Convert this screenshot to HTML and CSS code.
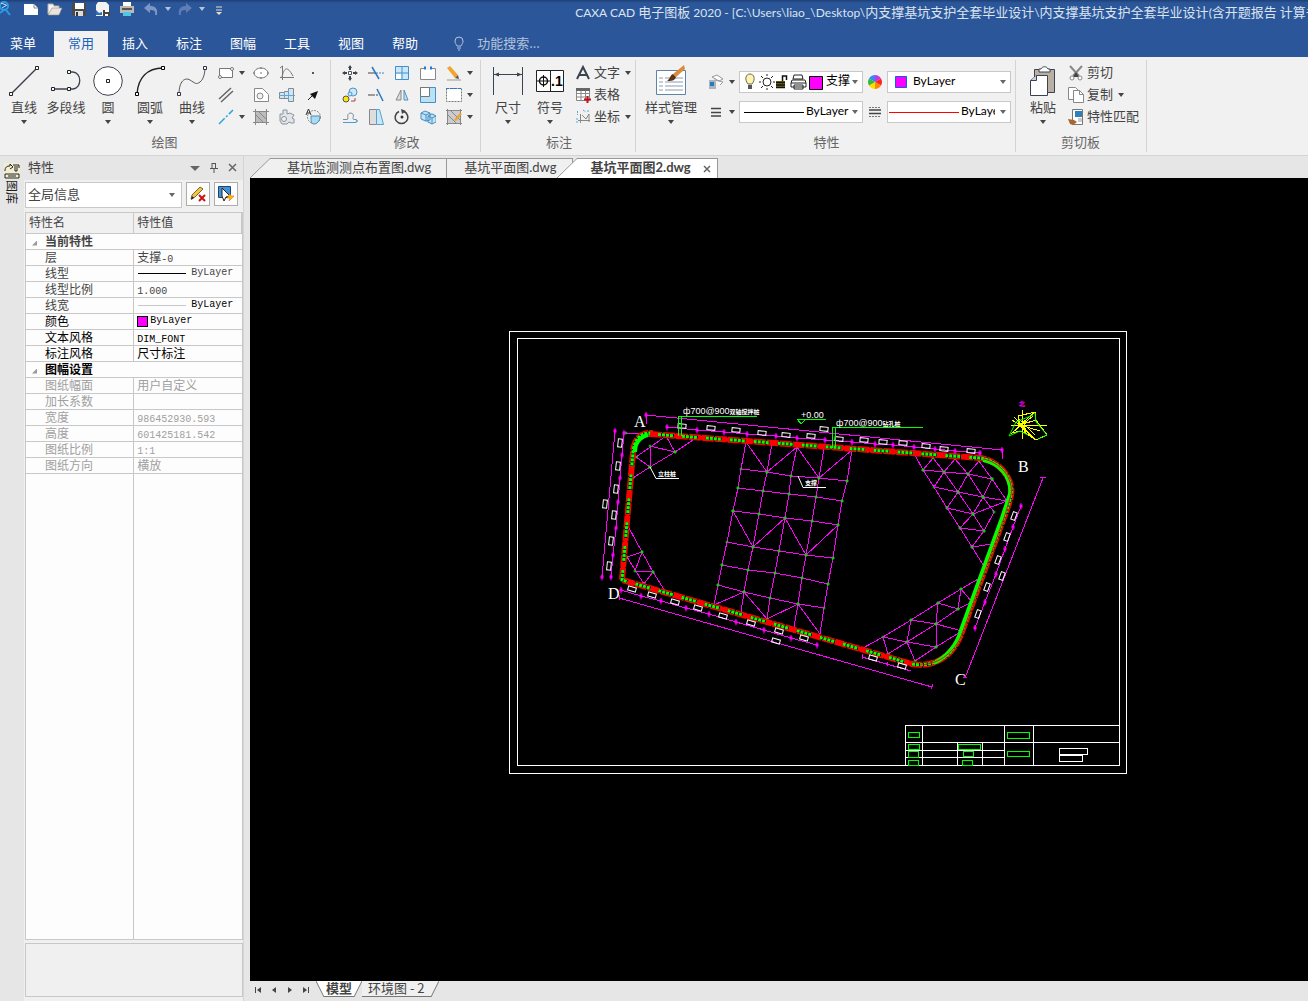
FILE: index.html
```html
<!DOCTYPE html>
<html lang="zh-CN">
<head>
    <meta charset="UTF-8">
    <meta name="viewport" content="width=device-width, initial-scale=1.0">
    <title>CAXA CAD 电子图板 2020</title>
    <link rel="stylesheet" href="styles.css">
</head>
<body>
    <header class="app-header">
        <div class="titlebar">
            <div class="quick-access">
                <svg class="logo" width="12" height="16" viewBox="0 0 12 16"><g fill="none" stroke="#2b9be8" stroke-width="2"><circle cx="4" cy="5" r="4"/><path d="M6 9l4 5M0 12l5-4"/></g><path d="M1 2l5 2M2 7l5-3" stroke="#bfe3ff"/></svg>
                <button aria-label="新建"><svg width="16" height="16"><path d="M1 3h10l4 4v7H1z" fill="#fff"/><path d="M11 3v4h4" fill="none" stroke="#8a8a8a"/></svg></button>
                <button aria-label="打开"><svg width="16" height="16"><path d="M1 13V3h5l1 2h5v2" fill="#f4f4f4" stroke="#b9b2a4"/><path d="M1 14l4-7h10l-3 7z" fill="#e8e5df" stroke="#8f8a80" stroke-width=".6"/></svg></button>
                <button aria-label="保存"><svg width="16" height="16"><path d="M1 2h14v13H3l-2-2z" fill="#4a4a4a"/><path d="M4 2h9v6H4z" fill="#fff"/><path d="M4 10h8v5H4z" fill="#ddd"/><path d="M5 11h2v4H5z" fill="#333"/></svg></button>
                <button aria-label="另存为"><svg width="16" height="16"><path d="M3 1h8l3 3v11H1V4z" fill="#f2f2f2"/><path d="M1 9l3 3 3-1v3H1z" fill="#2b6fb4"/><path d="M8 9h7v6H8z" fill="#444"/><path d="M10 9h4v2h-4zM10 13h3v2h-3z" fill="#fff"/></svg></button>
                <button aria-label="打印"><svg width="16" height="16"><path d="M4 1h8v5H4z" fill="#fff"/><path d="M1 5h14v7H1z" fill="#bdb9b2"/><path d="M3 7h10v2H3z" fill="#555"/><path d="M4 11h8v4H4z" fill="#4fc8e8"/></svg></button>
                <button aria-label="撤销"><svg width="16" height="16"><path d="M1 7l6-5v3c5 0 8 2 7 9h-2c1-4-1-5-5-5v3z" fill="#7d96c3"/></svg></button>
                <span class="caret light"></span>
                <button aria-label="重做"><svg width="16" height="16"><path d="M15 7L9 2v3C4 5 1 7 2 14h2c-1-4 1-5 5-5v3z" fill="#5f7db3"/></svg></button>
                <span class="caret light"></span>
                <button aria-label="自定义快速启动"><svg width="16" height="16"><path d="M5 6h6M5 9h6" stroke="#e6dcc8"/><path d="M5 11h6l-3 3z" fill="#e6dcc8"/></svg></button>
            </div>
            <h1 class="window-title"><span class="latin">CAXA CAD </span>电子图板<span class="latin"> 2020 - [C:\Users\liao_\Desktop\</span>内支撑基坑支护全套毕业设计<span class="latin">\</span>内支撑基坑支护全套毕业设计<span class="latin">(</span>含开题报告 计算书</h1>
        </div>
        <nav class="menu-tabs">
            <a href="#" class="menu-tab file-tab">菜单</a>
            <a href="#" class="menu-tab active">常用</a>
            <a href="#" class="menu-tab">插入</a>
            <a href="#" class="menu-tab">标注</a>
            <a href="#" class="menu-tab">图幅</a>
            <a href="#" class="menu-tab">工具</a>
            <a href="#" class="menu-tab">视图</a>
            <a href="#" class="menu-tab">帮助</a>
            <label class="search">
                <svg width="12" height="16" viewBox="0 0 12 16"><path d="M4 10C3 8 2 7 2 5a4 4 0 0 1 8 0c0 2-1 3-2 5zM4 12h4M5 14h2" fill="none" stroke="#b4c3dc"/></svg>
                <input type="text" placeholder="功能搜索..." aria-label="功能搜索">
            </label>
        </nav>
    </header>

    <section class="ribbon">
        <div class="group">
            <div class="group-body">
                <div class="big-row">
                    <button class="big-btn"><svg width="30" height="30"><path d="M2 28L28 2" stroke="#3c4350" stroke-width="1.500"/><g fill="#fff" stroke="#222"><path d="M.5 26.500h3v3h-3zM26.500.5h3v3h-3z"/></g></svg><span>直线</span><i class="caret"></i></button>
                    <button class="big-btn"><svg width="30" height="30"><path d="M2 23h16M18 6h4c9 1 9 16 0 17h-4" fill="none" stroke="#3c4350" stroke-width="1.300"/><g fill="#fff" stroke="#222"><path d="M.5 21.500h3v3h-3zM16.500 21.500h3v3h-3zM16.500 4.500h3v3h-3z"/></g></svg><span>多段线</span></button>
                    <button class="big-btn"><svg width="30" height="30"><circle cx="15" cy="15" r="14.300" fill="#fff" stroke="#3c4350"/><path d="M13.500 13.500h3v3h-3z" fill="#fff" stroke="#222"/></svg><span>圆</span><i class="caret"></i></button>
                    <button class="big-btn"><svg width="30" height="30"><path d="M2 28C3 12 12 2 28 2" fill="none" stroke="#222" stroke-width="1.300"/><g fill="#fff" stroke="#000"><path d="M.5 26.500h3v3h-3zM26.500.5h3v3h-3z"/></g></svg><span>圆弧</span><i class="caret"></i></button>
                    <button class="big-btn"><svg width="30" height="30"><path d="M2 28C2 15 8 11 13 14s6 5 10 2 5-10 5-15" fill="none" stroke="#555"/><g fill="#fff" stroke="#334"><path d="M.5 26.500h3v3h-3zM26.500.5h3v3h-3z"/></g></svg><span>曲线</span><i class="caret"></i></button>
                </div>
                <div class="icon-grid draw-grid">
                    <button aria-label="矩形"><svg width="16" height="16"><path d="M1.500 3.500h13v9h-13z" fill="#fff" stroke="#777"/><circle cx="14" cy="4" r="1.500" fill="#fff" stroke="#777"/><circle cx="2" cy="12" r="1.500" fill="#fff" stroke="#777"/></svg></button>
                    <i class="caret"></i>
                    <button aria-label="椭圆"><svg width="16" height="16"><ellipse cx="8" cy="8" rx="7" ry="5" fill="#fff" stroke="#777"/><path d="M8 7v2M0 8h2M14 8h2M8 2v2M8 12v2" stroke="#777"/></svg></button>
                    <button aria-label="公式曲线"><svg width="16" height="16"><path d="M3.500 1v14M1 12.500h14M1 3l2.500-2M3 12C5 3 8 0 14 11" fill="none" stroke="#777"/></svg></button>
                    <button aria-label="点"><svg width="16" height="16"><path d="M7 7h2v2H7z" fill="#555"/></svg></button>

                    <button aria-label="平行线"><svg width="16" height="16"><path d="M1 12L13 1M3 15L15 4" stroke="#666" stroke-width="1.500"/></svg></button>
                    <i></i>
                    <button aria-label="轮廓"><svg width="16" height="16"><path d="M1.500 1.500h8l6 6v7h-14z" fill="#fff" stroke="#888"/><circle cx="7" cy="9" r="3" fill="#f1f1f1" stroke="#888"/></svg></button>
                    <button aria-label="孔轴"><svg width="16" height="16"><path d="M.5 5.500h5v-1h4v-3h5v13h-5v-3h-9z" fill="#cfe6f7" stroke="#888"/><path d="M0 8.500h16M9.500 3v10M5.500 5v6" stroke="#6ba3d0"/></svg></button>
                    <button aria-label="箭头"><svg width="16" height="16"><path d="M3 13l6-6" stroke="#222"/><path d="M13 4l-3 8-5-5z" fill="#111"/></svg></button>

                    <button aria-label="中心线"><svg width="16" height="16"><path d="M1 15L15 1" stroke="#2aa5dd" stroke-width="1.500" stroke-dasharray="8 2 2 2"/></svg></button>
                    <i class="caret"></i>
                    <button aria-label="填充"><svg width="16" height="16"><path d="M3 3h10v10H3z" fill="#bbb"/><path d="M2.500 0v16M13.500 0v16M0 2.500h16M0 13.500h16M3 6l7 7M6 3l7 7" stroke="#888"/></svg></button>
                    <button aria-label="齿轮"><svg width="16" height="16"><path d="M1 5h3V1h4v4l3-1 4 2-2 3 2 1v4h-3l-2-1-2 2H3l-2-3z" fill="#dfe5ea" stroke="#8b949c"/><circle cx="5" cy="10" r="2.500" fill="#f1f1f1" stroke="#8b949c"/></svg></button>
                    <button aria-label="局部放大"><svg width="16" height="16"><circle cx="9" cy="8" r="6.500" fill="none" stroke="#888" stroke-dasharray="2 1"/><path d="M6 7h9c0 5-3 8-6 8s-3-3-3-8z" fill="#a8dcf5" stroke="#58a"/><path d="M1 6l2.500-6L6 6M2 4h3" fill="none" stroke="#333"/></svg></button>
                </div>
            </div>
            <h2>绘图</h2>
        </div>

        <div class="group">
            <div class="group-body">
                <div class="icon-grid modify-grid">
                    <button aria-label="平移"><svg width="16" height="16"><path d="M6.500 6.500h3v3h-3z" fill="#fff" stroke="#555"/><path d="M8 0l2 3H9v2H7V3H6zM8 16l2-3H9v-2H7v2H6zM0 8l3-2v1h2v2H3v1zM16 8l-3-2v1h-2v2h2v1z" fill="#3c4350"/></svg></button>
                    <button aria-label="裁剪"><svg width="16" height="16"><path d="M0 8h8" stroke="#444"/><path d="M8 8h8" stroke="#3b8ad0" stroke-dasharray="2 1"/><path d="M4 2l7 12" stroke="#2b78c5" stroke-width="1.500"/></svg></button>
                    <button aria-label="阵列"><svg width="16" height="16"><path d="M1.500 1.500h13v13h-13z" fill="#c9e9fa" stroke="#4590c8"/><path d="M8 1v14M1 8h14" stroke="#4590c8"/><path d="M2 9h5v5H2z" fill="#fff"/></svg></button>
                    <button aria-label="拉伸"><svg width="16" height="16"><path d="M.5 3.500h15v11H.5z" fill="#fff" stroke="#888"/><path d="M6 2h4v3H6z" fill="#f1f1f1"/><path d="M4 3h2M10 3h2" stroke="#2b78c5" stroke-width="3"/></svg></button>
                    <button aria-label="删除"><svg width="16" height="16"><path d="M1 3l3-2 8 9-3 3z" fill="#f3a52b"/><path d="M9 13l3-3 1 4z" fill="#555"/><path d="M1 15h14" stroke="#999"/></svg></button>
                    <i class="caret"></i>

                    <button aria-label="平移复制"><svg width="16" height="16"><circle cx="4" cy="12" r="3" fill="#ffe600" stroke="#555"/><circle cx="11" cy="5" r="4" fill="#cbe8fa" stroke="#4d94c6"/><circle cx="8" cy="7" r="2" fill="#cbe8fa" stroke="#4d94c6"/><path d="M9 14h4v-3" fill="none" stroke="#a44"/></svg></button>
                    <button aria-label="延伸"><svg width="16" height="16"><path d="M0 8h5" stroke="#444"/><path d="M5 8h6" stroke="#444" stroke-dasharray="2 1"/><path d="M9 2l6 12" stroke="#2b78c5" stroke-width="1.500"/></svg></button>
                    <button aria-label="镜像"><svg width="16" height="16"><path d="M7 3v10H2z" fill="#ddd" stroke="#888"/><path d="M10 3v10h4z" fill="#bfe2f6" stroke="#5a8fb4"/></svg></button>
                    <button aria-label="缩放"><svg width="16" height="16"><path d="M.5.5h15v15H.5z" fill="#b9e2f8" stroke="#4b8fc2"/><path d="M.5.5h9v9h-9z" fill="#fff" stroke="#777"/></svg></button>
                    <button aria-label="分解"><svg width="16" height="16"><path d="M.5 1.500h15v13H.5z" fill="#fff" stroke="#777" stroke-dasharray="2 1"/><path d="M0 1.500h16" stroke="#2b78c5" stroke-dasharray="3 1"/></svg></button>
                    <i class="caret"></i>

                    <button aria-label="偏移"><svg width="16" height="16"><path d="M1 10.500h4c2 0 0-3 1-5 2-3 7-1 5 3 0 2 0 2 2 2 3 0 2 3 0 3H1" fill="none" stroke="#7d8f9c"/><path d="M1 13.500h12c3 0 3-3 0-3" fill="none" stroke="#4b9ad0"/></svg></button>
                    <button aria-label="倒角"><svg width="16" height="16"><path d="M1.500.5h7v15h-7z" fill="#ddd" stroke="#888"/><path d="M8.500.5h3l4 15h-7z" fill="#c6e8f9" stroke="#5aa0cc"/></svg></button>
                    <button aria-label="旋转"><svg width="16" height="16"><path d="M5 2.500a6.300 6.300 0 1 0 5 0" fill="none" stroke="#444" stroke-width="1.500"/><path d="M7 0l5 2-4 3z" fill="#444"/><circle cx="8" cy="8" r="1.500" fill="#333"/></svg></button>
                    <button aria-label="块"><svg width="16" height="16"><path d="M1 4l4-2 10 3v8l-4 2-10-4z" fill="#bfe3f7"/><path d="M1 4l4-2 5 2v7l-4 1-5-2zM1 4l5 2v6M6 6l4-2M8 7l4-2 4 2v6l-4 2-4-2zM8 7l4 2v6M12 9l4-2" fill="none" stroke="#4d8fbe"/></svg></button>
                    <button aria-label="填充编辑"><svg width="16" height="16"><path d="M2 2h12v12H2z" fill="#ccc"/><path d="M1.500 0v16M14.500 0v16M0 1.500h16M0 14.500h16M2 6l8 8M5 2l9 9" stroke="#888"/><path d="M8 11l6-7 2 1-6 7z" fill="#f0a02b"/></svg></button>
                    <i class="caret"></i>
                </div>
            </div>
            <h2>修改</h2>
        </div>

        <div class="group">
            <div class="group-body">
                <div class="big-row">
                    <button class="big-btn"><svg width="30" height="30"><path d="M.5 1v28M29.500 1v28M1 8.500h28" stroke="#3c4350"/><path d="M1 8.500l5-2v4zM29 8.500l-5-2v4z" fill="#3c4350"/></svg><span>尺寸</span><i class="caret"></i></button>
                    <button class="big-btn"><svg width="30" height="30"><path d="M1.500 4.500h27v21h-27zM15.500 4v22" fill="#fff" stroke="#222"/><circle cx="8.500" cy="15" r="4" fill="none" stroke="#111" stroke-width="1.500"/><path d="M2 15h13M8.500 9v12" stroke="#111"/><text class="symbol-text" x="16" y="20">.1</text></svg><span>符号</span><i class="caret"></i></button>
                </div>
                <div class="list">
                    <button><svg width="16" height="16"><path d="M2 14L8 2l6 12M4 10h8" fill="none" stroke="#3c4350" stroke-width="2"/></svg>文字<i class="caret"></i></button>
                    <button><svg width="16" height="16"><path d="M1.500 1.500h13v12h-13zM1 6.500h14M1 10h14M6 4v10M10.500 4v10" fill="#fff" stroke="#888"/><path d="M1 1h14v3H1z" fill="#666"/><path d="M9 12.500h7M12.500 9v7" stroke="#c1121c" stroke-width="2"/></svg>表格</button>
                    <button><svg width="16" height="16"><path d="M5.500 5v9M3 11.500h12M7 6l4 4 3-5v8" fill="none" stroke="#888"/><path d="M2.500 2v4M8 1l3 2M13 1v3M2 9v5" stroke="#5aa4d8" stroke-dasharray="2 1"/></svg>坐标<i class="caret"></i></button>
                </div>
            </div>
            <h2>标注</h2>
        </div>

        <div class="group">
            <div class="group-body">
                <button class="big-btn wide"><svg width="30" height="30" overflow="visible"><path d="M.5 4.500h29v24H.5z" fill="#fff" stroke="#5d83a8"/><path d="M3 12h4M3 16h4M3 20h4M3 24h4M9 12h18M9 16h18M9 20h18M9 24h18" stroke="#8b9db0"/><path d="M28-1l1 4-9 8-3-3z" fill="#d98c3a"/><path d="M17 8l3 3c-1 4-5 4-9 4 3-2 3-6 6-7z" fill="#5c3518"/></svg><span>样式管理</span><i class="caret"></i></button>
                <div class="props">
                    <button aria-label="图层"><svg width="16" height="16"><path d="M4 3l5-2 6 4-4 2zM6 6l9 2-3 3" fill="#fff" stroke="#999"/><path d="M1 6h7v9H1z" fill="#a9b5c0"/><path d="M2 8h4v4H2z" fill="#2b78b5"/></svg></button>
                    <i class="caret"></i>
                    <div class="combo">
                        <svg width="80" height="18">
                            <path d="M4 11C0 6 2 1 6 1s6 5 2 10z" fill="#fff3b0" stroke="#665"/><path d="M4 12h4v4H4z" fill="#555"/>
                            <circle cx="23" cy="9" r="4" fill="#fff" stroke="#222"/><path d="M23 1v2M23 15v2M15 9h2M29 9h2M17 3l2 2M27 13l2 2M17 15l2-2M27 5l2-2" stroke="#222"/>
                            <path d="M32 8h9v7h-9z" fill="#776d10"/><path d="M32 9.500h9M32 12h9M32 14.500h9M38.500 8V3h4v4" fill="none" stroke="#111" stroke-width="1.500"/>
                            <path d="M50 2h8l1 4H49zM48 7h13l1 3v4H47v-4zM50 12h9v4h-9z" fill="#fff" stroke="#222"/><path d="M47 10h15" stroke="#222"/>
                            <path d="M65.500 3.500h13v13h-13z" fill="#f0f" stroke="#000"/>
                        </svg>
                        <select aria-label="当前图层"><option>支撑-0</option></select><i class="caret"></i>
                    </div>
                    <button aria-label="颜色"><svg width="16" height="16"><path d="M8 8V1a7 7 0 0 1 6 3.500z" fill="#c038e0"/><path d="M8 8l6-3.500a7 7 0 0 1 0 7z" fill="#f22"/><path d="M8 8l6 3.500A7 7 0 0 1 8 15z" fill="#f80"/><path d="M8 8v7a7 7 0 0 1-6-3.500z" fill="#fd0"/><path d="M8 8l-6 3.500a7 7 0 0 1 0-7z" fill="#3b3"/><path d="M8 8L2 4.500A7 7 0 0 1 8 1z" fill="#38f"/></svg></button>
                    <div class="combo color-combo">
                        <svg width="12" height="12"><path d="M.5.5h11v11H.5z" fill="#f0f" stroke="#0a64d8"/></svg>
                        <select aria-label="当前颜色"><option>ByLayer</option></select><i class="caret"></i>
                    </div>

                    <button aria-label="线型"><svg width="16" height="16"><path d="M3 4.500h10M3 8.500h10M3 12h10" stroke="#444" stroke-width="1.300"/></svg></button>
                    <i class="caret"></i>
                    <div class="combo">
                        <svg width="60" height="3"><path d="M0 1.500h60" stroke="#000"/></svg>
                        <select aria-label="当前线型"><option>ByLayer</option></select><i class="caret"></i>
                    </div>
                    <button aria-label="线宽"><svg width="16" height="16"><path d="M2 3.500h12M2 12.500h12" stroke="#777" stroke-dasharray="2 1"/><path d="M2 6h12M2 9.500h12" stroke="#444" stroke-width="1.500"/></svg></button>
                    <div class="combo width-combo">
                        <svg width="70" height="3"><path d="M0 1.500h70" stroke="#f00"/></svg>
                        <select aria-label="当前线宽"><option>ByLayer</option></select><i class="caret"></i>
                    </div>
                </div>
            </div>
            <h2>特性</h2>
        </div>

        <div class="group">
            <div class="group-body">
                <button class="big-btn"><svg width="30" height="30"><path d="M6.500 3.500h20v23h-20z" fill="#b9afa5" stroke="#3c4350"/><path d="M11 3h2c1-3 6-3 7 0h2v3H11z" fill="#fff" stroke="#3c4350"/><path d="M8.500 9.500h11v20h-17v-15z" fill="#fff" stroke="#3c4350"/><path d="M8.500 9.500v5h-6" fill="#c9d2da" stroke="#3c4350"/></svg><span>粘贴</span><i class="caret"></i></button>
                <div class="list">
                    <button><svg width="16" height="16"><path d="M2 1l9 10M14 1L5 11" stroke="#888" stroke-width="2"/><path d="M8 7l3 5H5z" fill="#444"/><circle cx="4" cy="13" r="2" fill="#fff" stroke="#888"/><circle cx="12" cy="13" r="2" fill="#fff" stroke="#888"/></svg>剪切</button>
                    <button><svg width="16" height="16"><path d="M.5.500h7l3 3v9H.5z" fill="#fff" stroke="#888"/><path d="M5.500 3.500h6l4 4v8h-10z" fill="#fff" stroke="#888"/><path d="M11.500 3.500v4h4" fill="none" stroke="#888"/></svg>复制<i class="caret"></i></button>
                    <button><svg width="16" height="16"><path d="M4.500.500h10v15h-10z" fill="#fff" stroke="#777"/><path d="M7 2h7v6H7z" fill="#2f7fb8"/><path d="M10 10h4M10 12h4" stroke="#999"/><path d="M0 10l6 1 3 2-4 3-3-1z" fill="#a8662c"/></svg>特性匹配</button>
                </div>
            </div>
            <h2>剪切板</h2>
        </div>
    </section>

    <main class="workspace">
        <aside class="dock">
            <svg width="16" height="16"><path d="M0 0h16v16H0z" fill="#f1eed2"/><path d="M1 8c0-4 2-5 5-5V1l3 3-3 2M9 2h6v3M11 3v5h2V3M1 11h14v4H1zM4 13h8" fill="none" stroke="#222"/></svg>
            <span>图库</span>
        </aside>

        <section class="panel">
            <div class="panel-title">
                <h2>特性</h2>
                <button aria-label="菜单"><svg width="10" height="10"><path d="M0 3h10L5 8z" fill="#666"/></svg></button>
                <button aria-label="固定"><svg width="10" height="10"><path d="M3 0v5M6.500 0v5M3 .5h4M1 5.500h8M5 6v4" stroke="#555"/></svg></button>
                <button aria-label="关闭"><svg width="10" height="10"><path d="M1 1l7 7M8 1L1 8" stroke="#666" stroke-width="1.500"/></svg></button>
            </div>
            <div class="panel-tools">
                <div class="combo filter-combo"><select aria-label="选择对象"><option>全局信息</option></select><i class="caret"></i></div>
                <button aria-label="清除选择"><svg width="16" height="16"><path d="M1 13l1-4 8-8 3 2-8 8z" fill="#f3c545" stroke="#763"/><path d="M1 14l1-4 2 2z" fill="#222"/><path d="M9 9l6 6M15 9l-6 6" stroke="#c11" stroke-width="2"/></svg></button>
                <button aria-label="快速选择"><svg width="16" height="16"><path d="M.5.500h12v11H.5z" fill="#3f92dc" stroke="#246"/><path d="M4 2l8 8-4 1-2 4-2-5z" fill="#fff" stroke="#222"/><path d="M12 8l-3 4h3l-1 3 5-5h-3z" fill="#fb0" stroke="#d70" stroke-width=".6"/></svg></button>
            </div>
            <div class="grid-wrap">
                <table class="prop-table">
                    <thead>
                        <tr><th>特性名</th><th>特性值</th></tr>
                    </thead>
                    <tbody>
                        <tr class="section"><th colspan="2"><i class="fold"></i>当前特性</th></tr>
                        <tr><td>层</td><td>支撑<span class="mono">-0</span></td></tr>
                        <tr><td>线型</td><td><div class="line-value"><i class="line dark"></i><span class="mono">ByLayer</span></div></td></tr>
                        <tr><td>线型比例</td><td><span class="mono">1.000</span></td></tr>
                        <tr><td>线宽</td><td><div class="line-value black"><i class="line"></i><span class="mono">ByLayer</span></div></td></tr>
                        <tr class="black"><td>颜色</td><td><div class="color-value"><i class="swatch"></i><span class="mono">ByLayer</span></div></td></tr>
                        <tr class="black"><td>文本风格</td><td><span class="mono">DIM_FONT</span></td></tr>
                        <tr class="black"><td>标注风格</td><td>尺寸标注</td></tr>
                        <tr class="section black"><th colspan="2"><i class="fold"></i>图幅设置</th></tr>
                        <tr class="disabled"><td>图纸幅面</td><td>用户自定义</td></tr>
                        <tr class="disabled"><td>加长系数</td><td></td></tr>
                        <tr class="disabled"><td>宽度</td><td><span class="mono">986452930.593</span></td></tr>
                        <tr class="disabled"><td>高度</td><td><span class="mono">601425181.542</span></td></tr>
                        <tr class="disabled"><td>图纸比例</td><td><span class="mono">1:1</span></td></tr>
                        <tr class="disabled"><td>图纸方向</td><td>横放</td></tr>
                    </tbody>
                </table>
                <div class="grid-rest"></div>
            </div>
            <div class="panel-hint"></div>
        </section>

        <section class="documents">
            <div class="doc-tabs">
                <a href="#" class="doc-tab"><svg width="20" height="20"><path d="M0 20L20 .5V20z" fill="#f0f0f0"/><path d="M0 20L20 .5" stroke="#999"/></svg><span>基坑监测测点布置图.dwg</span></a>
                <a href="#" class="doc-tab"><span>基坑平面图.dwg</span></a>
                <a href="#" class="doc-tab active"><svg width="20" height="20"><path d="M0 20L20 .5V20z" fill="#fff"/><path d="M0 20L20 .5" stroke="#999"/></svg><span>基坑平面图2.dwg</span><button aria-label="关闭"><svg width="8" height="8"><path d="M1 1l6 6M7 1L1 7" stroke="#666" stroke-width="1.500"/></svg></button></a>
            </div>

            <svg class="drawing" viewBox="250 178 1058 803">
                <defs>
                    <marker id="node" markerUnits="userSpaceOnUse" markerWidth="5" markerHeight="5" refX="2.500" refY="2.500"><path d="M1 2h3v1H1zM2 1h1v3H2z" fill="#0d0"/></marker>
                    <marker id="stop" markerUnits="userSpaceOnUse" markerWidth="7" markerHeight="7" refX="3.500" refY="3.500"><path d="M2 2h3v3H2z" fill="#f0f"/><path d="M3.500 0v7" stroke="#f0f"/></marker>
                    <path id="tag" d="M-4-2h8v4h-8z"/>
                </defs>

                <!-- 图框 -->
                <g class="white sharp">
                    <path d="M509.500 331.500h617v442h-617zM517.500 338.500h602v427h-602z"/>
                    <path d="M905.500 765.500v-40h214M922.500 725.500v40M1004.500 725.500v40M1033.500 725.500v40M905.500 742.500h214M905.500 750.500h99M905.500 757.500h99M957.500 742.500v23M982.500 742.500v23"/>
                    <path d="M1059.500 748.500h28v6h-28zM1059.500 755.500h23v6h-23z"/>
                </g>
                <path class="green sharp" d="M908.500 732.500h11v5h-11zM1007.500 732.500h22v6h-22zM908.500 744.500h11v5h-11zM958.500 744.500h22v5h-22zM908.500 751.500h10v6h-10zM963.500 751.500h10v5h-10zM1007.500 751.500h22v5h-22zM908.500 760.500h10v5h-10zM962.500 760.500h10v5h-10z"/>

                <!-- 支撑 -->
                <g class="magenta nodes">
                    <path d="M746 442L741 469 738 488 733 511 727 542 722 565 718 585 714 605"/>
                    <path d="M772 443L767 472 763 491 759 514 753 547 748 570 744 592 741 612"/>
                    <path d="M797 447L791 476 789 494 785 518 779 551 775 573 770 598 767 619"/>
                    <path d="M824 448L819 478 816 497 812 521 806 555 802 578 798 604 794 627"/>
                    <path d="M852 450L847 481 842 501 838 525 833 558 828 584 824 608 820 634"/>
                    <path d="M741 469L767 472 791 476 819 478 847 481M738 488L763 491 789 494 816 497 842 501M733 511L759 514 785 518 812 521 838 525"/>
                    <path d="M727 542L753 547 779 551 806 555 833 558M722 565L748 570 775 573 802 578 828 584M718 585L744 592 770 598 798 604 824 608"/>
                    <path d="M746 442L767 472 797 447 819 478 852 450M733 511L753 547 785 518 806 555 838 525M714 605L744 592 767 619 798 604 820 634"/>
                    <path d="M696 438L675 452 650 467 633 478M626 433L650 433 666 436 636 457 650 467 650 446 675 452 666 436"/>
                    <path d="M629 528L642 552 653 572 665 591M627 557L642 552 635 571 653 572 644 584 627 557"/>
                    <path d="M915 455L923 470 934 487 947 508 960 528 972 547 985 568"/>
                    <path d="M923 470L933 458 944 472 955 459 968 474 979 461 992 479M923 470L944 472 968 474 992 479 1007 501 983 497 958 492 934 487"/>
                    <path d="M934 487L944 472 958 492 968 474 983 497 992 479M947 508L958 492 973 514 983 497 994 512 984 531 973 514 960 528"/>
                    <path d="M947 508L973 514 1007 501M960 528L984 531 972 547 992 544"/>
                    <path d="M863 648L883 637 911 620 938 603 961 589 980 578"/>
                    <path d="M883 637L888 654 907 642 936 624 958 609 972 602 961 589 958 609 938 603 936 624 911 620 907 642 883 637"/>
                    <path d="M907 642L915 661 936 647 962 631 936 624 936 647 907 642"/>
                </g>

                <!-- 围护墙 -->
                <path class="wall-red" d="M650 434L980 458C998 460 1014 478 1011 495 1010 502 1006 512 1003 520L962 632C954 655 936 668 912 664L622 580 633 452C634 440 640 433 650 433z"/>
                <path class="wall-gap" d="M650 434L980 458C998 460 1014 478 1011 495 1010 502 1006 512 1003 520L962 632C954 655 936 668 912 664L622 580 633 452C634 440 640 433 650 433z"/>
                <path class="wall-green" d="M650 434L980 458C998 460 1014 478 1011 495 1010 502 1006 512 1003 520L962 632C954 655 936 668 912 664L622 580 633 452C634 440 640 433 650 433z"/>
                <path class="wall-solid" d="M983 460C1000 463 1012 478 1010 494L1002 518 961 630C956 648 946 657 934 663M635 452C635 443 640 437 648 435"/>
                <path class="wall-line" d="M983 459C1000 462 1014 478 1011 495L1004 518 963 631C956 652 940 664 920 665"/>
                <path class="wall-pile" d="M650 434L980 458M912 664L622 580 633 452"/>

                <!-- 尺寸线 -->
                <g class="magenta stops">
                    <path d="M646 415L1002 450"/>
                    <path d="M667 427L697 430 724 432 747 434 776 436 797 438 825 440 852 442 875 444 893 445 914 447 935 449 955 451 980 453"/>
                    <path d="M615 431L602 577"/>
                    <path d="M624 433L622 455 620 478 618 502 616 528 613 555 611 577"/>
                    <path d="M621 590L641 596 661 601 686 608 709 614 736 622 764 630 791 638 817 645"/>
                    <path d="M1021 506L1013 527 1005 549 996 574 985 602 975 628"/>
                </g>
                <path class="magenta" d="M619 598L932 687M619 595v5M933 684l-2 5M862 657L911 671M862 654v5M887 662v4M1043 478L965 678M1040 477h6M963 677h4M1002 450v9M646 415v9"/>

                <g class="white">
                    <g>
                        <use href="#tag" transform="translate(682 426) rotate(5)"/><use href="#tag" transform="translate(711 428) rotate(5)"/><use href="#tag" transform="translate(736 430) rotate(5)"/><use href="#tag" transform="translate(762 433) rotate(5)"/><use href="#tag" transform="translate(786 435) rotate(5)"/><use href="#tag" transform="translate(811 436) rotate(5)"/><use href="#tag" transform="translate(824 429) rotate(5)"/>
                        <use href="#tag" transform="translate(839 439) rotate(5)"/><use href="#tag" transform="translate(864 440) rotate(5)"/><use href="#tag" transform="translate(883 442) rotate(5)"/><use href="#tag" transform="translate(903 443) rotate(5)"/><use href="#tag" transform="translate(926 446) rotate(5)"/><use href="#tag" transform="translate(944 449) rotate(5)"/><use href="#tag" transform="translate(971 451) rotate(5)"/>
                    </g>
                    <g>
                        <use href="#tag" transform="translate(620 443) rotate(96)"/><use href="#tag" transform="translate(618 466) rotate(96)"/><use href="#tag" transform="translate(616 489) rotate(96)"/><use href="#tag" transform="translate(605 504) rotate(96)"/><use href="#tag" transform="translate(614 515) rotate(96)"/><use href="#tag" transform="translate(611 541) rotate(96)"/><use href="#tag" transform="translate(609 566) rotate(96)"/>
                    </g>
                    <g>
                        <use href="#tag" transform="translate(632 589) rotate(16)"/><use href="#tag" transform="translate(652 595) rotate(16)"/><use href="#tag" transform="translate(675 602) rotate(16)"/><use href="#tag" transform="translate(698 608) rotate(16)"/><use href="#tag" transform="translate(723 616) rotate(16)"/><use href="#tag" transform="translate(751 623) rotate(16)"/><use href="#tag" transform="translate(779 631) rotate(16)"/><use href="#tag" transform="translate(804 638) rotate(16)"/><use href="#tag" transform="translate(776 641) rotate(16)"/><use href="#tag" transform="translate(873 658) rotate(16)"/><use href="#tag" transform="translate(902 666) rotate(16)"/>
                    </g>
                    <g>
                        <use href="#tag" transform="translate(1014 516) rotate(110)"/><use href="#tag" transform="translate(1007 537) rotate(110)"/><use href="#tag" transform="translate(998 560) rotate(110)"/><use href="#tag" transform="translate(1002 576) rotate(110)"/><use href="#tag" transform="translate(987 587) rotate(110)"/><use href="#tag" transform="translate(978 614) rotate(110)"/>
                    </g>
                    <path d="M650 467L656 478.500H679M798 476L803 487.500H826"/>
                </g>
                <path class="green sharp" d="M757 416.500H678.500V436M681.500 416v20M923 427.500H832.500V448M835.500 427v21M797 419.500h29M798 420l3 4 4-4"/>

                <!-- 指北针 -->
                <path class="yellow" d="M1011 425h36M1022 410v29M1020 425L1035 412 1036 420 1047 435 1036 440 1027 434 1021 431 1012 433 1020 425 1018 416 1035 412M1020 425L1040 431M1020 425L1036 440M1020 425L1027 434M1020 425L1036 420M1020 425L1012 420M1013 432L1033 416M1014 417L1030 434M1019 419l16 16"/>
                <path class="green" d="M1009 436L1016 422 1033 415M1009 436L1020 431 1028 435M1035 413l1 9 11 13-9 4"/>

                <g class="labels">
                    <text x="634" y="427">A</text><text x="1018" y="472">B</text><text x="955" y="685">C</text><text x="608" y="599">D</text>
                </g>
                <g class="notes">
                    <text x="683" y="414">ф700@900<tspan>双轴搅拌桩</tspan></text>
                    <text x="836" y="426">ф700@900<tspan>钻孔桩</tspan></text>
                    <text x="801" y="418">+0.00</text>
                    <text x="658" y="476"><tspan>立柱桩</tspan></text>
                    <text x="805" y="485"><tspan>支撑</tspan></text>
                    <text x="1019" y="406"><tspan class="north">北</tspan></text>
                </g>
            </svg>

            <div class="sheet-tabs">
                <button aria-label="第一个"><svg width="8" height="8"><path d="M1.500 1v6" stroke="#444"/><path d="M7 1v6L3 4z" fill="#444"/></svg></button>
                <button aria-label="上一个"><svg width="8" height="8"><path d="M6 1v6L2 4z" fill="#444"/></svg></button>
                <button aria-label="下一个"><svg width="8" height="8"><path d="M2 1v6l4-3z" fill="#444"/></svg></button>
                <button aria-label="最后一个"><svg width="8" height="8"><path d="M6.500 1v6" stroke="#444"/><path d="M1 1v6l4-3z" fill="#444"/></svg></button>
                <a href="#" class="sheet-tab active"><svg width="8" height="16"><path d="M0 0h8v16z" fill="#fff"/><path d="M0 0l8 16" stroke="#777"/></svg><span>模型</span><svg width="8" height="16"><path d="M0 0h8L0 16z" fill="#fff"/><path d="M8 0L0 16" stroke="#777"/></svg></a>
                <a href="#" class="sheet-tab"><span>环境图 - 2</span><svg width="8" height="16"><path d="M0 0h8L0 16z" fill="#f0f0f0"/><path d="M8 0L0 16" stroke="#777"/></svg></a>
            </div>
        </section>
    </main>
</body>
</html>
```

FILE: styles.css
```css
:root {
    --blue: #2b579a;
    --ribbon: #f1f1f1;
    --frame: #e6e6e6;
    --border: #c8c8c8;
    --text: #444;
    --magenta: #f0f;
}

* {
    margin: 0;
    padding: 0;
    box-sizing: border-box;
}

body {
    display: flex;
    flex-direction: column;
    height: 100vh;
    overflow: hidden;
    background-color: var(--frame);
    color: var(--text);
    font-family: "Noto Sans CJK SC", "Noto Sans", sans-serif;
    font-size: 13px;
}

button {
    display: flex;
    align-items: center;
    justify-content: center;
    border: none;
    background: none;
    color: inherit;
    font: inherit;
}

a {
    color: inherit;
    text-decoration: none;
}

svg {
    display: block;
    flex-shrink: 0;
}

h2 {
    font-size: 13px;
    font-weight: normal;
}

.caret {
    width: 6px;
    height: 4px;
    flex-shrink: 0;
    background-color: #444;
    clip-path: polygon(0 0, 100% 0, 50% 100%);
}

.caret.light {
    background-color: #b4c3dc;
}

/* 标题栏 */
.app-header {
    background-color: var(--blue);
    background-image: linear-gradient(#1d3f75, #2b579a);
    background-size: 100% 3px;
    background-repeat: no-repeat;
    color: #fff;
}

.titlebar {
    display: flex;
    height: 31px;
    overflow: hidden;
}

.quick-access {
    display: flex;
    align-items: center;
    width: 222px;
    height: 18px;
    flex-shrink: 0;
}

.quick-access button {
    width: 24px;
    height: 18px;
    flex-shrink: 0;
}

.quick-access .logo {
    margin-right: 7px;
}

.quick-access .caret {
    margin: 0 2px;
}

.window-title {
    margin-left: 27%;
    color: #dbe3ef;
    font-size: 13px;
    font-weight: normal;
    line-height: 23px;
    white-space: pre;
}

.latin {
    font-family: Lato, sans-serif;
    font-size: 12px;
}

.menu-tabs {
    display: flex;
    height: 26px;
    line-height: 23px;
}

.menu-tab {
    padding: 0 14px;
}

.menu-tab.file-tab {
    padding: 0 18px 0 10px;
}

.menu-tab.active {
    background-color: var(--ribbon);
    color: #1a62b8;
}

.search {
    display: flex;
    align-items: center;
    gap: 12px;
    margin-left: 21px;
}

.search input {
    width: 160px;
    padding-bottom: 3px;
    border: none;
    background: none;
    font: inherit;
    color: #fff;
}

.search input::placeholder {
    color: #b4c3dc;
}

/* 功能区 */
.ribbon {
    display: flex;
    height: 99px;
    padding-top: 3px;
    border-bottom: 1px solid #d4d4d4;
    background-color: var(--ribbon);
}

.group {
    height: 92px;
    padding: 2px 4px 0 6px;
    border-right: 1px solid #d4d4d4;
}

.group:first-child {
    padding-left: 3px;
}

.group:last-child {
    padding-right: 7px;
}

.group-body {
    display: flex;
    height: 70px;
}

.group h2 {
    color: #666;
    line-height: 19px;
    text-align: center;
}

.big-row {
    display: flex;
}

.big-btn {
    flex-direction: column;
    justify-content: flex-start;
    width: 42px;
    height: 66px;
    padding-top: 4px;
}

.big-btn span {
    line-height: 21px;
    white-space: nowrap;
}

.big-btn .caret {
    margin-top: 3px;
}

.big-btn.wide {
    width: 58px;
}

.icon-grid {
    display: grid;
    grid-auto-rows: 22px;
    align-items: center;
}

.draw-grid {
    grid-template-columns: 26px 9px 26px 26px 26px;
}

.modify-grid {
    grid-template-columns: repeat(5, 26px) 9px;
}

.symbol-text {
    font: bold 14px "Liberation Sans", sans-serif;
}

.list button {
    gap: 3px;
    height: 22px;
    padding: 0 0 3px 4px;
}

.list svg {
    margin-top: 3px;
}

.list .caret {
    margin: 3px 0 0 2px;
}

.props {
    display: grid;
    grid-template-columns: 26px 10px 124px 24px 124px;
    grid-template-rows: 22px 22px;
    gap: 8px 0;
    align-items: center;
    align-content: start;
    padding: 9px 0 0 3px;
}

.combo {
    display: flex;
    align-items: center;
    height: 22px;
    padding: 0 4px;
    border: 1px solid var(--border);
    background-color: #fff;
    overflow: hidden;
}

.combo select {
    flex: 1;
    min-width: 0;
    margin: 0 2px;
    padding-bottom: 2px;
    border: none;
    background: none;
    appearance: none;
    color: #000;
    font-family: Lato, "Noto Sans CJK SC", sans-serif;
    font-size: 12px;
    line-height: 18px;
}

.combo .caret {
    background-color: #666;
}

.color-combo {
    padding-left: 7px;
}

.color-combo select {
    margin-left: 6px;
}

.width-combo {
    padding-left: 1px;
}

.width-combo select {
    margin-right: 5px;
}

/* 工作区 */
.workspace {
    display: flex;
    flex: 1;
    min-height: 0;
}

.dock {
    display: flex;
    flex-direction: column;
    align-items: center;
    gap: 1px;
    width: 24px;
    padding-top: 7px;
    font-size: 12px;
}

.dock span {
    writing-mode: vertical-rl;
    text-orientation: sideways;
    line-height: 16px;
    color: #222;
}

.panel {
    display: flex;
    flex-direction: column;
    width: 220px;
    padding-bottom: 4px;
    border-right: 1px solid #d4d4d4;
    background-color: #f0f0f0;
}

.panel-title {
    display: flex;
    align-items: center;
    gap: 9px;
    height: 24px;
    padding: 0 5px 0 4px;
    background-color: var(--frame);
}

.panel-title h2 {
    flex: 1;
    padding-bottom: 3px;
}

.panel-tools {
    display: flex;
    gap: 4px;
    height: 32px;
    padding: 2px 5px 4px 1px;
}

.panel-tools button {
    width: 24px;
    height: 24px;
    border: 1px solid #adadad;
    background-color: #fdfdfd;
}

.filter-combo {
    flex: 1;
    height: 26px;
    padding: 0 6px 0 0;
}

.filter-combo select {
    color: var(--text);
    font-size: 13px;
}

.grid-wrap {
    display: flex;
    flex: 1;
    flex-direction: column;
    min-height: 0;
    margin: 0 0 3px 1px;
    border: 1px solid var(--border);
    background-color: #fdfdfd;
}

.prop-table {
    width: 100%;
    table-layout: fixed;
    border-collapse: collapse;
    font-size: 12px;
}

.prop-table th,
.prop-table td {
    height: 16px;
    border-bottom: 1px solid var(--border);
    line-height: 13px;
    vertical-align: top;
    text-align: left;
    font-weight: normal;
    white-space: nowrap;
}

.prop-table thead th {
    height: 20px;
    padding-left: 3px;
    border-right: 1px solid var(--border);
    background-color: #f0f0f0;
    line-height: 18px;
}

.prop-table td {
    padding-left: 19px;
}

.prop-table td + td {
    padding-left: 3px;
    border-left: 1px solid var(--border);
}

.prop-table .section th {
    font-weight: bold;
}

.fold {
    display: inline-block;
    width: 5px;
    height: 5px;
    margin: 0 8px 0 6px;
    background-color: #999;
    clip-path: polygon(100% 0, 100% 100%, 0 100%);
}

.mono {
    font-family: "Liberation Mono", monospace;
    font-size: 10px;
    line-height: 1;
}

.black {
    color: #000;
}

.disabled {
    color: #a0a0a0;
}

.line-value,
.color-value {
    display: flex;
    align-items: center;
    gap: 5px;
    height: 15px;
}

.line-value .line {
    width: 48px;
    height: 1px;
    margin-left: 1px;
    background-color: var(--border);
}

.line-value .dark {
    background-color: #000;
}

.color-value {
    gap: 2px;
}

.swatch {
    width: 11px;
    height: 11px;
    border: 1px solid #000;
    background-color: var(--magenta);
}

.grid-rest {
    width: 50%;
    flex: 1;
    border-right: 1px solid var(--border);
}

.panel-hint {
    height: 54px;
    margin-left: 1px;
    border: 1px solid var(--border);
}

.documents {
    display: flex;
    flex: 1;
    flex-direction: column;
    min-width: 0;
    margin-left: 6px;
}

.doc-tabs {
    display: flex;
    height: 22px;
    padding-top: 2px;
    font-family: Lato, "Noto Sans CJK SC", sans-serif;
}

.doc-tab {
    display: flex;
    height: 20px;
}

.doc-tab span {
    padding: 0 15px 0 17px;
    border-top: 1px solid #999;
    border-right: 1px solid #999;
    background-color: #f0f0f0;
    line-height: 17px;
    white-space: nowrap;
}

.doc-tab.active {
    margin-left: -16px;
}

.doc-tab.active span {
    padding: 0 12px 0 14px;
    border-right: none;
    background-color: #fff;
    font-weight: bold;
}

.doc-tab button {
    padding-right: 6px;
    border-top: 1px solid #999;
    border-right: 1px solid #999;
    background-color: #fff;
}

.drawing {
    width: 100%;
    flex: 1;
    min-height: 0;
    background-color: #000;
    fill: none;
}

.sharp {
    shape-rendering: crispEdges;
}

.white {
    stroke: #fff;
}

.green {
    stroke: #0f0;
}

.magenta {
    stroke: var(--magenta);
    shape-rendering: crispEdges;
}

.yellow {
    stroke: #ff0;
    shape-rendering: crispEdges;
}

.nodes path {
    marker-mid: url(#node);
}

.stops path {
    marker: url(#stop);
}

#node path {
    stroke: none;
}

.wall-red {
    stroke: #f00;
    stroke-width: 6;
    stroke-dasharray: 12 1;
}

.wall-gap {
    stroke: #000;
    stroke-width: 3;
}

.wall-green {
    stroke: #0f0;
    stroke-width: 3;
    stroke-dasharray: 3 1;
}

.wall-solid {
    stroke: #0f0;
    stroke-width: 4;
}

.wall-line {
    stroke: #f00;
}

.wall-pile {
    stroke: #f00;
    stroke-width: 4;
    stroke-dasharray: 8 16;
}

.labels {
    fill: #fff;
    font: 16px "Liberation Serif", serif;
}

.notes {
    fill: #fff;
    font: 9px "Liberation Sans", sans-serif;
}

.notes tspan {
    font: bold 6px "Noto Sans CJK SC", sans-serif;
}

.notes .north {
    fill: var(--magenta);
}

.sheet-tabs {
    display: flex;
    height: 20px;
}

.sheet-tabs button {
    width: 16px;
    height: 18px;
}

.sheet-tab {
    display: flex;
    height: 16px;
    line-height: 14px;
}

.sheet-tab.active {
    margin-left: 2px;
}

.sheet-tab span {
    padding: 0 6px;
    border-bottom: 1px solid #777;
    background-color: #f0f0f0;
    white-space: nowrap;
}

.sheet-tab.active span {
    padding: 0 2px;
    background-color: #fff;
    font-weight: bold;
}
```
